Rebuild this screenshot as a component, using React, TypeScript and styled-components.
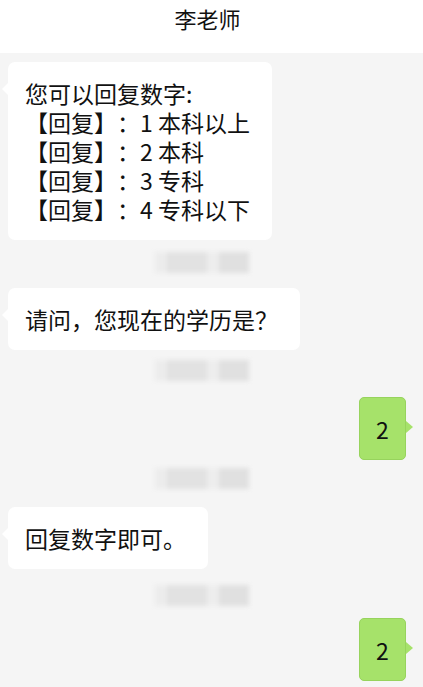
import styled, { createGlobalStyle } from 'styled-components';

const GlobalStyle = createGlobalStyle`
  html, body {
    margin: 0;
    padding: 0;
    background: #f5f5f5;
  }
  body {
    font-family: "Noto Sans CJK SC", "Noto Sans", sans-serif;
    color: #111;
    text-spacing-trim: space-all;
  }
`;

const Page = styled.div`
  width: 423px;
  min-height: 687px;
  background: #f5f5f5;
  overflow: hidden;
`;

const Header = styled.div`
  height: 53px;
  background: #ffffff;
  display: flex;
  justify-content: center;
  align-items: flex-start;
  padding: 2px 8px 0 0;
  box-sizing: border-box;
  font-size: 22px;
  line-height: 32px;
  color: #111;
`;

const Feed = styled.div`
  display: flex;
  flex-direction: column;
  padding: 0 17px 0 8px;
`;

const Row = styled.div<{ $mine?: boolean; $gap: number }>`
  display: flex;
  justify-content: ${(p) => (p.$mine ? 'flex-end' : 'flex-start')};
  margin-top: ${(p) => p.$gap}px;
`;

const Bubble = styled.div`
  position: relative;
  background: #ffffff;
  border-radius: 7px;
  padding: 17px 22px 16px 17px;
  font-size: 23px;
  line-height: 29px;
  white-space: pre;
  text-spacing-trim: space-all;

  &::before {
    content: '';
    position: absolute;
    left: -6px;
    top: 21px;
    border-style: solid;
    border-width: 6px 6px 6px 0;
    border-color: transparent #ffffff transparent transparent;
  }
`;

const GreenBubble = styled.div`
  position: relative;
  background: #a6e26a;
  border: 1px solid #97d35d;
  border-radius: 5px;
  min-width: 47px;
  box-sizing: border-box;
  padding: 17px 0 15px;
  text-align: center;
  font-size: 23px;
  line-height: 29px;

  &::after {
    content: '';
    position: absolute;
    right: -8px;
    top: 23px;
    border-style: solid;
    border-width: 6px 0 6px 7px;
    border-color: transparent transparent transparent #a6e26a;
  }
`;

const Stamp = styled.div<{ $gap: number }>`
  display: flex;
  align-self: flex-start;
  margin-left: 147px;
  margin-top: ${(p) => p.$gap}px;
  height: 21px;
  filter: blur(2px);
`;

const StampBlock = styled.div<{ $w: number; $c: string }>`
  width: ${(p) => p.$w}px;
  background: ${(p) => p.$c};
`;

function Timestamp({ gap }: { gap: number }) {
  return (
    <Stamp $gap={gap}>
      <StampBlock $w={12} $c="#ececec" />
      <StampBlock $w={40} $c="#e2e2e2" />
      <StampBlock $w={12} $c="#ededed" />
      <StampBlock $w={30} $c="#e0e0e0" />
    </Stamp>
  );
}

export default function App() {
  return (
    <Page>
      <GlobalStyle />
      <Header>李老师</Header>
      <Feed>
        <Row $gap={9}>
          <Bubble>{'您可以回复数字:\n【回复】：1 本科以上\n【回复】：2 本科\n【回复】：3 专科\n【回复】：4 专科以下'}</Bubble>
        </Row>
        <Timestamp gap={12} />
        <Row $gap={15}>
          <Bubble>请问，您现在的学历是？</Bubble>
        </Row>
        <Timestamp gap={10} />
        <Row $mine $gap={16}>
          <GreenBubble>2</GreenBubble>
        </Row>
        <Timestamp gap={8} />
        <Row $gap={18}>
          <Bubble>回复数字即可。</Bubble>
        </Row>
        <Timestamp gap={16} />
        <Row $mine $gap={12}>
          <GreenBubble>2</GreenBubble>
        </Row>
      </Feed>
    </Page>
  );
}
